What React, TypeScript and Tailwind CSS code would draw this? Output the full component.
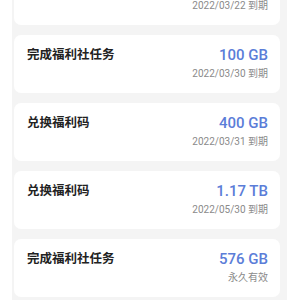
import React from "react";

interface Grant {
  title: string;
  amount: string;
  expire: string;
}

// the first row is scrolled mostly out of view; only its expiry line shows
const firstExpire = "2022/03/22 到期";

const grants: Grant[] = [
  { title: "完成福利社任务", amount: "100 GB", expire: "2022/03/30 到期" },
  { title: "兑换福利码", amount: "400 GB", expire: "2022/03/31 到期" },
  { title: "兑换福利码", amount: "1.17 TB", expire: "2022/05/30 到期" },
  { title: "完成福利社任务", amount: "576 GB", expire: "永久有效" },
];

const App: React.FC = () => {
  return (
    <div className="w-[300px] h-[300px] bg-white overflow-hidden font-['Roboto','Noto_Sans_CJK_SC',sans-serif]">
      <div className="ml-[12px] w-[275px] bg-[#f4f4f4] pl-[2px] pr-[7px] pb-[20px] flex flex-col gap-[10px]">
        <div className="h-[25px] bg-white rounded-b-[7px] flex justify-end items-end pr-[12px] pb-[12px]">
          <span className="text-[10px] leading-[14px] text-[#8a8a8a]">{firstExpire}</span>
        </div>
        {grants.map((g, i) => (
          <div
            key={i}
            className="h-[58px] bg-white rounded-[7px] flex justify-between pl-[13px] pr-[12px]"
          >
            <div className="pt-[10px] text-[12.5px] leading-[18px] font-bold text-[#222] font-['Noto_Sans_CJK_SC',sans-serif]">
              {g.title}
            </div>
            <div className="pt-[10px] flex flex-col items-end">
              <span className="text-[15px] leading-[20px] font-medium text-[#5b7dd8]">
                {g.amount}
              </span>
              <span className="mt-[2px] text-[10px] leading-[14px] text-[#8a8a8a]">
                {g.expire}
              </span>
            </div>
          </div>
        ))}
      </div>
    </div>
  );
};

export default App;
